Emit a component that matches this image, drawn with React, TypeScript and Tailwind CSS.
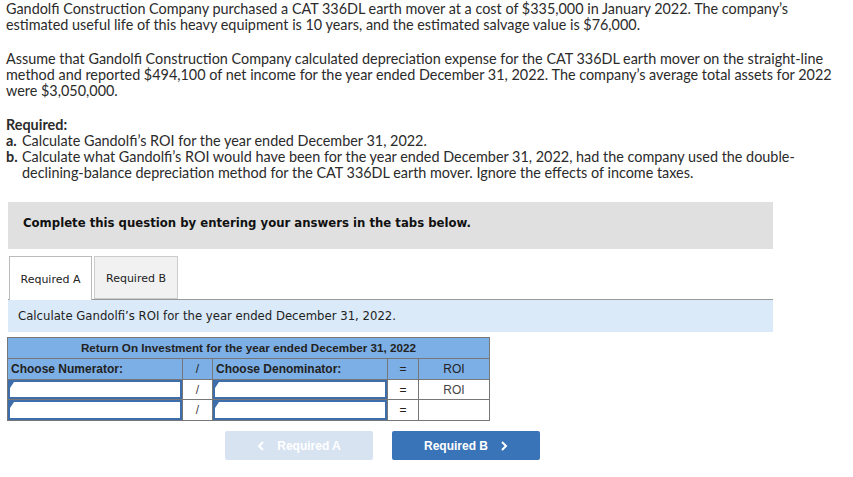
export default function App() {
  const prose = { fontFamily: "Lato, 'Open Sans', sans-serif" };
  const verdana = { fontFamily: "'DejaVu Sans', Verdana, sans-serif" };
  const arial = { fontFamily: "'Liberation Sans', Arial, sans-serif" };

  const Cell = () => (
    <div className="relative h-full border-2 border-[#3d6eab] bg-white">
      <span className="absolute left-0 top-0 w-0 h-0 border-t-[6px] border-t-[#3d6eab] border-r-[4px] border-r-transparent" />
    </div>
  );

  return (
    <div className="w-[853px] h-[477px] bg-white text-[#222] overflow-hidden">
      <div className="pl-[6px] pt-[1px] text-[14.4px] leading-[16px] text-[#2b2b2b]" style={prose}>
        <p className="whitespace-nowrap">
          Gandolfi Construction Company purchased a CAT 336DL earth mover at a cost of $335,000 in January 2022. The company’s
          <br />
          estimated useful life of this heavy equipment is 10 years, and the estimated salvage value is $76,000.
        </p>
        <p className="whitespace-nowrap mt-[18px]">
          Assume that Gandolfi Construction Company calculated depreciation expense for the CAT 336DL earth mover on the straight-line
          <br />
          method and reported $494,100 of net income for the year ended December 31, 2022. The company’s average total assets for 2022
          <br />
          were $3,050,000.
        </p>
        <p className="mt-[18px] font-bold">Required:</p>
        <div className="whitespace-nowrap">
          <div className="flex">
            <span className="w-[16px] font-bold">a.</span>
            <span>Calculate Gandolfi’s ROI for the year ended December 31, 2022.</span>
          </div>
          <div className="flex">
            <span className="w-[16px] font-bold">b.</span>
            <span>
              Calculate what Gandolfi’s ROI would have been for the year ended December 31, 2022, had the company used the double-
              <br />
              declining-balance depreciation method for the CAT 336DL earth mover. Ignore the effects of income taxes.
            </span>
          </div>
        </div>
      </div>

      <div className="ml-[8px] w-[765px] mt-[21px]">
        <div className="h-[47px] bg-[#e0e0e0] flex items-center pl-[15px] pb-[4px] text-[11.7px] font-bold text-[#111]" style={verdana}>
          Complete this question by entering your answers in the tabs below.
        </div>

        <div className="mt-[7px] flex items-end gap-[2px] pl-[1px] text-[11px] text-[#222]" style={verdana}>
          <div className="w-[83px] h-[44px] border border-[#bbb] border-b-0 bg-white flex items-center justify-center pt-[3px] -mb-px relative z-10">
            Required A
          </div>
          <div className="w-[84px] h-[43px] border border-[#ccc] bg-[#f1f1f1] flex items-center justify-center pt-[3px]">
            Required B
          </div>
        </div>
        <div className="border-t border-[#999]" />
        <div className="h-[32px] bg-[#dbeaf8] flex items-center pl-[10px] pt-[2px] text-[11.7px] text-[#222]" style={verdana}>
          Calculate Gandolfi’s ROI for the year ended December 31, 2022.
        </div>
      </div>

      <div className="ml-[7px] mt-[5px] w-[483px] border border-[#777] text-[12px] text-[#222]" style={arial}>
        <div className="h-[21px] bg-[#7cafe5] border-b border-[#777] flex items-center justify-center font-bold text-[11.7px]">
          Return On Investment for the year ended December 31, 2022
        </div>
        <div className="grid grid-cols-[175px_30px_175px_31px_1fr] h-[21px] bg-[#7cafe5] border-b border-[#777]">
          <div className="flex items-center pl-[3px] font-bold border-r border-[#777]">Choose Numerator:</div>
          <div className="flex items-center justify-center border-r border-[#777]">/</div>
          <div className="flex items-center pl-[3px] font-bold border-r border-[#777]">Choose Denominator:</div>
          <div className="flex items-center justify-center border-r border-[#777]">=</div>
          <div className="flex items-center justify-center">ROI</div>
        </div>
        <div className="grid grid-cols-[175px_30px_175px_31px_1fr] h-[20px] border-b border-[#777]">
          <div className="border-r border-[#777]"><Cell /></div>
          <div className="flex items-center justify-center border-r border-[#777] text-[#444]">/</div>
          <div className="border-r border-[#777]"><Cell /></div>
          <div className="flex items-center justify-center border-r border-[#777]">=</div>
          <div className="flex items-center justify-center text-[#444]">ROI</div>
        </div>
        <div className="grid grid-cols-[175px_30px_175px_31px_1fr] h-[20px]">
          <div className="border-r border-[#777]"><Cell /></div>
          <div className="flex items-center justify-center border-r border-[#777] text-[#444]">/</div>
          <div className="border-r border-[#777]"><Cell /></div>
          <div className="flex items-center justify-center border-r border-[#777]">=</div>
          <div />
        </div>
      </div>

      <div className="mt-[10px] ml-[225px] flex gap-[19px] text-[12px] font-bold" style={arial}>
        <div className="w-[148px] h-[29px] rounded-[2px] bg-[#d7e3f1] text-white flex items-center justify-center gap-[12px]">
          <svg width="8" height="10" viewBox="0 0 8 10"><path d="M6 1 L2 5 L6 9" stroke="white" strokeWidth="2" fill="none" /></svg>
          <span>Required A</span>
        </div>
        <div className="w-[148px] h-[29px] rounded-[2px] bg-[#3a74b8] text-white flex items-center justify-center gap-[12px]">
          <span>Required B</span>
          <svg width="8" height="10" viewBox="0 0 8 10"><path d="M2 1 L6 5 L2 9" stroke="white" strokeWidth="2" fill="none" /></svg>
        </div>
      </div>
    </div>
  );
}
